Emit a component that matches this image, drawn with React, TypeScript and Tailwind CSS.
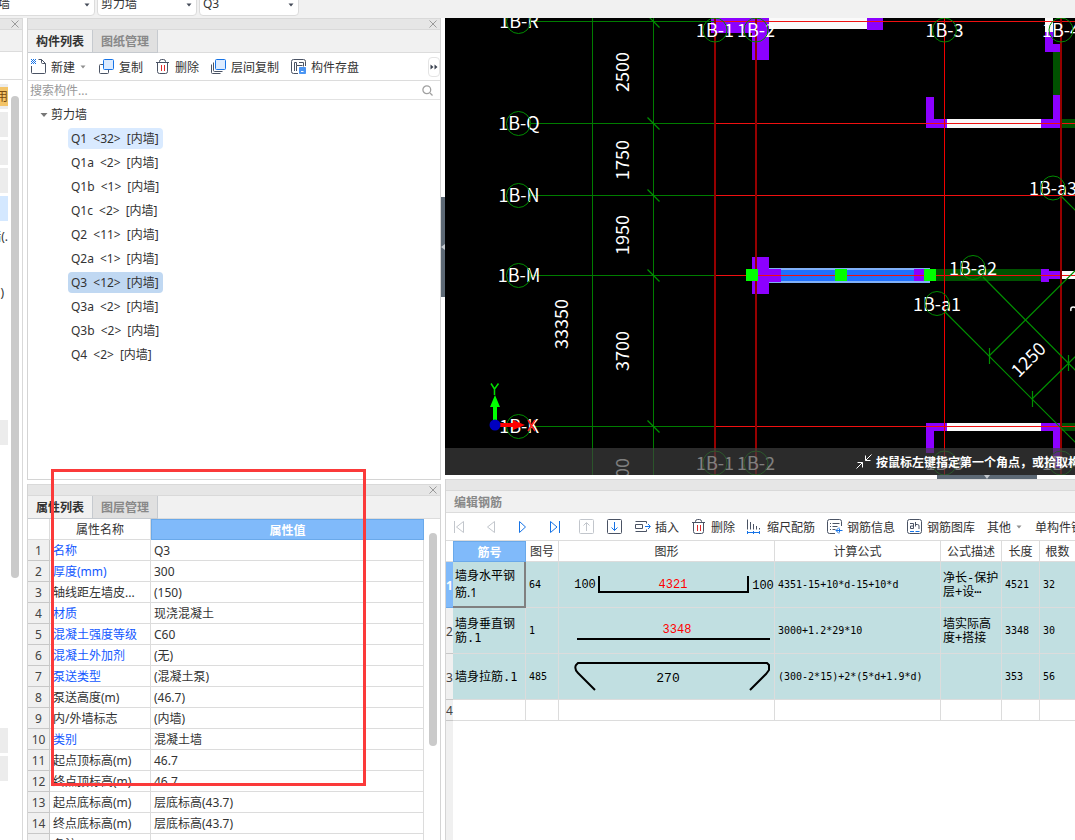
import React, { useState } from 'react';
import clsx from 'clsx';

interface WallComponent {
  name: string;
  count: number;
}

interface Property {
  name: string;
  value: string;
  editable?: boolean;
}

const walls: WallComponent[] = [
  { name: 'Q1', count: 32 },
  { name: 'Q1a', count: 2 },
  { name: 'Q1b', count: 1 },
  { name: 'Q1c', count: 2 },
  { name: 'Q2', count: 11 },
  { name: 'Q2a', count: 1 },
  { name: 'Q3', count: 12 },
  { name: 'Q3a', count: 2 },
  { name: 'Q3b', count: 2 },
  { name: 'Q4', count: 2 },
];

const properties: Property[] = [
  { name: '名称', value: 'Q3', editable: true },
  { name: '厚度(mm)', value: '300', editable: true },
  { name: '轴线距左墙皮...', value: '(150)' },
  { name: '材质', value: '现浇混凝土', editable: true },
  { name: '混凝土强度等级', value: 'C60', editable: true },
  { name: '混凝土外加剂', value: '(无)', editable: true },
  { name: '泵送类型', value: '(混凝土泵)', editable: true },
  { name: '泵送高度(m)', value: '(46.7)' },
  { name: '内/外墙标志', value: '(内墙)' },
  { name: '类别', value: '混凝土墙', editable: true },
  { name: '起点顶标高(m)', value: '46.7' },
  { name: '终点顶标高(m)', value: '46.7' },
  { name: '起点底标高(m)', value: '层底标高(43.7)' },
  { name: '终点底标高(m)', value: '层底标高(43.7)' },
  { name: '备注', value: '' },
];

// Navigation tree rows, only their right end shows
const navRows = Array.from({ length: 27 }, (_, i) => {
  if (i === 4) return { bg: 'bg-[#d4e8ff]', text: '' };
  if (i === 5) return { bg: 'bg-white', text: '墙(.' };
  if (i === 7) return { bg: 'bg-white pr-1', text: ')' };
  if ([0, 1, 2, 3, 12, 23, 24].includes(i)) return { bg: 'bg-[#ececec]', text: '' };
  return { bg: 'bg-white', text: '' };
});

/* ---------- icons ---------- */

const Svg = ({ children, className }: { children: React.ReactNode; className?: string }) => (
  <svg width="16" height="16" viewBox="0 0 16 16" fill="none" stroke="#4a5364" className={clsx('shrink-0', className)}>
    {children}
  </svg>
);

const NewIcon = () => (
  <Svg>
    <path d="M7.500 .5h3l4 4v9a1 1 0 0 1-1 1h-12a1 1 0 0 1-1-1V7M10.500 .5v3a1 1 0 0 0 1 1h3" />
    <path d="M0 .5h1M2 .5h1M4 .5h1M1 1.500h1M3 1.500h1M0 2.500h1M2 2.500h1M4 2.500h1M1 3.500h1M3 3.500h1M0 4.500h1M2 4.500h1M4 4.500h1" stroke="#1673e6" />
  </Svg>
);

const CopyIcon = () => (
  <Svg>
    <path d="M4 5.500H1.500a1 1 0 0 0-1 1v7a1 1 0 0 0 1 1h7a1 1 0 0 0 1-1V11" />
    <rect x="4.500" y=".5" width="10" height="10" rx="1" fill="#dcebff" stroke="#1673e6" />
  </Svg>
);

const LayerCopyIcon = () => (
  <Svg>
    <path d="M2.500 3.500v8a1 1 0 0 0 1 1h8M.5 5.500v8a1 1 0 0 0 1 1h8" />
    <rect x="4.500" y=".5" width="10" height="10" rx="1" fill="#dcebff" stroke="#1673e6" />
  </Svg>
);

const TrashIcon = () => (
  <Svg>
    <path d="M1 3.500h13M4.500 3.500v-1a2 2 0 0 1 2-2h2a2 2 0 0 1 2 2v1M2.500 3.500v9a2 2 0 0 0 2 2h6a2 2 0 0 0 2-2v-9" />
    <path d="M6.500 6v6M9.500 6v6" stroke="#e22b2b" />
  </Svg>
);

const SaveIcon = () => (
  <Svg>
    <path d="M7 14.500H2.500a2 2 0 0 1-2-2v-10a2 2 0 0 1 2-2h10a2 2 0 0 1 2 2V7M3.500 12V3.500h2v3h6M8 3.500h4.500v4M5.500 6.500V12" />
    <path d="M8.500 8.500h6v6h-6z" fill="#4b95f3" stroke="#4b95f3" />
    <path d="M10 12.500h2.500" stroke="#fff" />
  </Svg>
);

const InsertIcon = () => (
  <Svg>
    <path d="M.5 2.500h11M.5 12.500h11M.5 5.500h7v4h-7zM11.500 2.500v2M11.500 10.500v2" />
    <path d="M10 7.500h5M13 5 15.500 7.500 13 10" stroke="#1673e6" />
  </Svg>
);

const ScaleIcon = () => (
  <Svg>
    <path d="M.5 .5v10M3.500 3v7.500M6.500 5v5.500M9.500 7v3.500M12.500 9v1.500" />
    <path d="M1 13.500h12M.5 12v3M6.500 12v3M12.500 12v3" stroke="#1673e6" />
  </Svg>
);

const InfoIcon = () => (
  <Svg>
    <path d="M8 14.500H2.500a2 2 0 0 1-2-2v-10a2 2 0 0 1 2-2h10a2 2 0 0 1 2 2V7M3 4.500h1M5.500 4.500h7M3 7.500h1M5.500 7.500h5M3 10.500h1M5.500 10.500h3" />
    <path d="M15.500 11.500H9M12 8.500 9 11.500l3 3M12.500 9.500v4" stroke="#1673e6" />
  </Svg>
);

const LibraryIcon = () => (
  <Svg>
    <rect x=".5" y=".5" width="14" height="14" rx="2" />
    <path d="M3 4.500h3.500v5h-3v-2.500h3M8.500 3v4.500M8.500 5.500h2a1.500 1.500 0 0 1 1.500 1.500v3" />
    <path d="M3 12.500h4M8.500 12.500h4" stroke="#1673e6" />
  </Svg>
);

const FirstIcon = () => (
  <Svg>
    <path d="M3.500 2v12M12.500 2.500v11L5.500 8z" stroke="#c2c6cc" />
  </Svg>
);

const PrevIcon = () => (
  <Svg>
    <path d="M11.500 2.500v11L4.500 8z" stroke="#c2c6cc" />
  </Svg>
);

const NextIcon = () => (
  <Svg>
    <path d="M4.500 2.500v11l6-5.500z" stroke="#1673e6" />
  </Svg>
);

const LastIcon = () => (
  <Svg>
    <path d="M3.500 2.500v11L10 8zM12.500 2v12" stroke="#1673e6" />
  </Svg>
);

const UpIcon = () => (
  <Svg>
    <g stroke="#c2c6cc">
      <rect x=".5" y=".5" width="14" height="14" rx="1" />
      <path d="M7.500 12V4M4.500 6.500l3-3 3 3" />
    </g>
  </Svg>
);

const DownIcon = () => (
  <Svg>
    <rect x=".5" y=".5" width="14" height="14" rx="1" />
    <path d="M7.500 3v8.500M4.500 8.500l3 3 3-3" stroke="#1673e6" />
  </Svg>
);

const CloseIcon = () => (
  <svg width="8" height="8" viewBox="0 0 8 8" stroke="#9a9a9a">
    <path d="M.5 .5l7 7M7.500 .5l-7 7" />
  </svg>
);

const CaretDown = ({ className }: { className?: string }) => (
  <svg width="8" height="8" viewBox="0 0 8 8" className={className}>
    <path d="M1.500 2.500h5L4 5.500z" fill="currentColor" />
  </svg>
);

/* ---------- shared pieces ---------- */

const ToolButton = ({ icon, label, dropdown }: { icon?: React.ReactNode; label: string; dropdown?: boolean }) => (
  <button className="flex shrink-0 items-center gap-1 whitespace-nowrap">
    {icon}
    <span className="pt-0.5">{label}</span>
    {dropdown && <CaretDown className="text-[#909090]" />}
  </button>
);

const PanelStrip = () => (
  <div className="flex h-3 shrink-0 items-center justify-end border-y border-[#d9d9d9] bg-[#e6e6e6] px-[3px]">
    <button aria-label="关闭">
      <CloseIcon />
    </button>
  </div>
);

const Tabs = ({ labels }: { labels: string[] }) => {
  const [active, setActive] = useState(0);
  return (
    <div className="flex h-[23px] shrink-0 border-b border-[#dcdcdc] bg-[#f1f1f1]">
      {labels.map((label, i) => (
        <button
          key={label}
          onClick={() => setActive(i)}
          className={clsx(
            'h-[23px] w-[65px] border-r border-b border-[#c6cacf] pt-0.5 font-bold',
            active === i ? 'bg-[#f1f1f1] text-[#333]' : 'bg-[#e0e0e0] text-[#888]',
          )}
        >
          {label}
        </button>
      ))}
    </div>
  );
};

const TopSelect = ({ label, value, className }: { label: string; value: string; className: string }) => (
  <div className={clsx('relative shrink-0', className)}>
    <select
      aria-label={label}
      className="h-6 w-full appearance-none rounded border border-[#dcdcdc] bg-white px-[3px] text-[#333]"
    >
      <option>{value}</option>
    </select>
    <CaretDown className="pointer-events-none absolute top-[9px] right-1 text-[#444b58]" />
  </div>
);

/* ---------- left side ---------- */

const NavStrip = () => (
  <aside className="flex w-[23px] shrink-0 flex-col border-r border-[#d9d9d9] bg-white">
    <PanelStrip />
    <div className="h-[22px] shrink-0 border-b border-[#dcdcdc] bg-[#f1f1f1]" />
    <div className="h-7 shrink-0 border-b border-[#dcdcdc]" />
    <div className="flex min-h-0 flex-1 gap-[3px] overflow-hidden pt-1">
      <div className="flex w-2 flex-col gap-[3px] overflow-hidden">
        {navRows.map((row, i) => (
          <div key={i} className={clsx('flex h-[25px] shrink-0 items-center justify-end overflow-hidden text-[#333]', row.bg)}>
            {i === 0 ? (
              <span className="flex h-[19px] w-2 items-center justify-end bg-[#f3c468] text-[#7a4a10]">用</span>
            ) : (
              <span className="whitespace-nowrap">{row.text}</span>
            )}
          </div>
        ))}
      </div>
      <div className="mt-3 h-[482px] w-2 rounded-full bg-[#cacaca]" />
    </div>
  </aside>
);

const ComponentList = () => {
  const [selected, setSelected] = useState('Q3');
  return (
    <section className="flex min-h-0 flex-1 flex-col border border-t-0 border-[#d4d4d4] bg-white">
      <PanelStrip />
      <Tabs labels={['构件列表', '图纸管理']} />
      <div className="flex h-7 shrink-0 items-center gap-3 border-b border-[#dcdcdc] pl-[3px]">
        <ToolButton icon={<NewIcon />} label="新建" dropdown />
        <ToolButton icon={<CopyIcon />} label="复制" />
        <ToolButton icon={<TrashIcon />} label="删除" />
        <ToolButton icon={<LayerCopyIcon />} label="层间复制" />
        <ToolButton icon={<SaveIcon />} label="构件存盘" />
        <button aria-label="更多" className="ml-auto flex h-5 w-3 items-center justify-center rounded border border-[#e4e4e4]">
          <svg width="8" height="6" viewBox="0 0 8 6" fill="#3c4350" className="shrink-0">
            <path d="M.5 .5 3.500 3 .5 5.500zM4.500 .5 7.500 3 4.500 5.500z" />
          </svg>
        </button>
      </div>
      <div className="flex h-[19px] shrink-0 items-center border-b border-[#e2e2e2] pr-[7px] pl-0.5">
        <input
          type="text"
          aria-label="搜索构件"
          placeholder="搜索构件..."
          className="h-4 flex-1 bg-transparent pt-0.5 outline-none placeholder:text-[#999]"
        />
        <svg width="11" height="11" viewBox="0 0 11 11" fill="none" stroke="#a0a0a0" strokeWidth="1.300">
          <circle cx="4.800" cy="4.800" r="3.900" />
          <path d="M8 8l2.500 2.500" />
        </svg>
      </div>
      <div className="pt-[5px] pl-3">
        <button className="flex h-5 items-center gap-[3px]">
          <svg width="8" height="8" viewBox="0 0 8 8" fill="#777">
            <path d="M.5 2h7L4 6z" />
          </svg>
          剪力墙
        </button>
        <ul className="mt-[3px] space-y-[3px] pl-7">
          {walls.map((wall) => (
            <li key={wall.name} className="h-[21px]">
              <button
                onClick={() => setSelected(wall.name)}
                className={clsx(
                  'flex h-[21px] items-center gap-1.5 rounded px-[3px] whitespace-nowrap',
                  wall.name === selected && 'bg-[#c0d8f2] pr-1',
                  wall.name === 'Q1' && wall.name !== selected && 'bg-[#d9eaff] pr-1',
                )}
              >
                <span>{wall.name}</span>
                <span>&lt;{wall.count}&gt;</span>
                <span>[内墙]</span>
              </button>
            </li>
          ))}
        </ul>
      </div>
    </section>
  );
};

const PropertyPanel = () => (
  <section className="flex h-[356px] shrink-0 flex-col overflow-hidden border-x border-[#d4d4d4] bg-white">
    <PanelStrip />
    <Tabs labels={['属性列表', '图层管理']} />
    <div className="flex min-h-0 flex-1 overflow-hidden">
      <div className="min-w-0 flex-1">
        <table className="w-full table-fixed border-separate border-spacing-0">
          <colgroup>
            <col className="w-[22px]" />
            <col className="w-[101px]" />
            <col />
          </colgroup>
          <thead>
            <tr className="h-[21px]">
              <th className="border-r border-b border-[#dcdcdc]" />
              <th className="border-r border-b border-[#dcdcdc] px-0 pt-0.5 pb-0 font-normal">属性名称</th>
              <th className="border border-[#6aa9ea] bg-[#80bafa] px-0 pt-0.5 pb-0 font-bold text-white">属性值</th>
            </tr>
          </thead>
          <tbody>
            {properties.map((property, i) => (
              <tr key={property.name} className="h-[21px]">
                <td className="border-r border-b border-[#c8c8c8] bg-[#f0f0f0] px-0 pt-0.5 pb-0 text-center text-[#444]">{i + 1}</td>
                <td className={clsx('border-r border-b border-[#dcdcdc] px-[3px] pt-0.5 pb-0 whitespace-nowrap', property.editable && 'text-[#1358ff]')}>
                  {property.name}
                </td>
                <td className="border-r border-b border-[#dcdcdc] px-[3px] pt-0.5 pb-0 whitespace-nowrap">{property.value}</td>
              </tr>
            ))}
          </tbody>
        </table>
      </div>
      <div className="w-4 shrink-0 pt-[14px] pl-[5px]">
        <div className="h-[213px] w-2 rounded-full bg-[#cacaca]" />
      </div>
    </div>
  </section>
);

/* ---------- drawing area ---------- */

const rowAxes = [
  { label: '1B-R', y: 3.5 },
  { label: '1B-Q', y: 105.5 },
  { label: '1B-N', y: 177.5 },
  { label: '1B-M', y: 257.5 },
  { label: '1B-K', y: 408.5 },
];

const columnAxes = [
  { label: '1B-1', x: 270, wide: true },
  { label: '1B-2', x: 311, wide: true },
  { label: '1B-3', x: 499.5 },
  { label: '1B-4', x: 616, wide: true },
];

const verticalSizes = [
  { label: '2500', x: 184, y: 54 },
  { label: '1750', x: 184, y: 142 },
  { label: '1950', x: 184, y: 217 },
  { label: '3700', x: 184, y: 333 },
  { label: '33350', x: 123, y: 306 },
];

const obliqueAxes = [
  { label: '1B-a1', x: 492, y: 285.5 },
  { label: '1B-a2', x: 528, y: 249.5 },
  { label: '1B-a3', x: 608, y: 170 },
];

const DrawingArea = () => (
  <div className="relative min-h-0 flex-1 overflow-hidden bg-black">
    <svg width="100%" height="100%" className="block" fontFamily="'Noto Sans CJK SC', sans-serif" fontSize="18">
      {/* walls */}
      <g fill="#fafafa">
        <rect x="324" y="0" width="98" height="11" />
        <rect x="600" y="0" width="8" height="14" />
        <rect x="502" y="101" width="94" height="9" />
        <rect x="616" y="253" width="900" height="8" />
        <rect x="502" y="405" width="94" height="8" />
      </g>
      <g fill="#005200">
        <rect x="608" y="34" width="9" height="43" />
        <rect x="617" y="101" width="900" height="9" />
        <rect x="491" y="251" width="105" height="12" />
        <rect x="617" y="405" width="900" height="8" />
      </g>
      <rect x="323" y="250" width="162" height="15" fill="#80b0f8" />
      <rect x="323" y="252" width="162" height="11" fill="#1f70ff" />
      <g fill="#8c00ff">
        <path d="M266 0H324V42H307V15H266z" />
        <rect x="422" y="0" width="16" height="12" />
        <path d="M600 14H608V26H616V34H600z" />
        <path d="M481 79H489V101H502V110H481z" />
        <path d="M608 77H616V110H596V101H608z" />
        <path d="M307 239H324V251H336V264H324V276H307z" />
        <rect x="469" y="251" width="11" height="12" />
        <path d="M596 251H604V253H616V261H604V264H596z" />
        <path d="M481 405H502V413H489V435H481z" />
        <path d="M596 405H616V450H608V413H596z" />
      </g>

      {/* axis grid */}
      <g stroke="#007c00" fill="none">
        <path d="M147.500 0V1000M208.500 0V1000" />
        {rowAxes.map((axis) => (
          <path key={axis.label} d={`M86 ${axis.y}H270`} />
        ))}
      </g>
      {rowAxes.map((axis) => (
        <path key={axis.label} d={`M202.500 ${axis.y - 6}l12 12`} stroke="#009000" strokeWidth="1.200" />
      ))}
      {rowAxes.map((axis) => (
        <path key={axis.label} d={`M270 ${axis.y}H2000`} stroke="#f01010" />
      ))}
      {columnAxes.map((axis) => (
        <path key={axis.label} d={`M${axis.x} 0V1000`} stroke={axis.wide ? '#960000' : '#f00000'} strokeWidth={axis.wide ? 2 : 1} />
      ))}
      <g stroke="#009000" strokeWidth="1.200" fill="none">
        <path d="M500 294 L636 430M538 259 L636 358M544 338 L636 247M587 381 L636 333M617 179 L636 198" />
        <path d="M544.500 330v16M587.500 373v16M623.500 337v16" />
      </g>

      {/* selection grips */}
      <g fill="#00ff00">
        <rect x="301" y="251" width="12" height="12" />
        <rect x="390" y="251" width="12" height="12" />
        <rect x="479" y="251" width="12" height="12" />
      </g>

      {/* axis labels */}
      <g fill="#fff" textAnchor="middle">
        {rowAxes.map((axis) => (
          <text key={axis.label} x="74" y={axis.y + 6}>{axis.label}</text>
        ))}
        {columnAxes.map((axis) => (
          <React.Fragment key={axis.label}>
            <text x={axis.x} y="19">{axis.label}</text>
            <text x={axis.x} y="452">{axis.label}</text>
          </React.Fragment>
        ))}
        {obliqueAxes.map((axis) => (
          <text key={axis.label} x={axis.x} y={axis.y + 7}>{axis.label}</text>
        ))}
        {verticalSizes.map((size) => (
          <text key={size.label} transform={`translate(${size.x} ${size.y}) rotate(-90)`}>{size.label}</text>
        ))}
        <text transform="translate(184 450) rotate(-90)">00</text>
        <text transform="translate(588 346) rotate(-45)">1250</text>
      </g>
      <path d="M626 293c-1-4 2-5 5-3" stroke="#fff" strokeWidth="1.500" fill="none" />
      <g stroke="#008c00" fill="none">
        {rowAxes.map((axis) => (
          <circle key={axis.label} cx="73.500" cy={axis.y} r="12" />
        ))}
        {columnAxes.map((axis) => (
          <React.Fragment key={axis.label}>
            <circle cx={axis.x} cy="12" r="12" />
            <circle cx={axis.x} cy="445" r="12" />
          </React.Fragment>
        ))}
        {obliqueAxes.map((axis) => (
          <circle key={axis.label} cx={axis.x} cy={axis.y} r="12" />
        ))}
      </g>

      {/* UCS marker */}
      <path d="M48 404V389H45L50 377 55 389H52V404z" fill="#00ff00" />
      <path d="M53 405H68V402L80 407 68 412V409H53z" fill="#ff0000" />
      <circle cx="50" cy="407" r="5.500" fill="#0000c0" />
      <path d="M46 365.500L49.500 371M53.500 365.500L49.500 371V377" stroke="#00e000" strokeWidth="1.500" fill="none" />
      <path d="M83 402L90 413M90 402L83 413" stroke="#ff2020" strokeWidth="1.500" />
    </svg>

    {/* command hint */}
    <div className="absolute inset-x-0 bottom-0 flex h-[27px] items-center gap-1 bg-[#404040]/67 pl-[411px] font-bold whitespace-nowrap text-white">
      <svg width="16" height="16" viewBox="0 0 16 16" fill="none" stroke="#fff" className="shrink-0">
        <path d="M15.500 .5l-6 6M9.500 1.500v5h5M.5 14.500l6-6M1.500 8.500h5v5" />
      </svg>
      <span className="pt-0.5">按鼠标左键指定第一个角点，或拾取构件</span>
    </div>
  </div>
);

/* ---------- rebar table ---------- */

const shapeText = { fontFamily: "'Liberation Mono', monospace", textAnchor: 'middle' as const };

const HorizontalShape = () => (
  <svg width="215" height="45" viewBox="0 0 215 45" className="mx-auto block" fontSize="12" {...shapeText}>
    <path d="M40 14V30H189V14" fill="none" stroke="#000" strokeWidth="2" />
    <text x="26" y="26">100</text>
    <text x="114" y="26" fill="#f00">4321</text>
    <text x="204" y="27">100</text>
  </svg>
);

const VerticalShape = () => (
  <svg width="215" height="45" viewBox="0 0 215 45" className="mx-auto block" fontSize="12" {...shapeText}>
    <path d="M18 31H211" stroke="#000" strokeWidth="2" />
    <text x="118" y="25" fill="#f00">3348</text>
  </svg>
);

const TieShape = () => (
  <svg width="215" height="45" viewBox="0 0 215 45" className="mx-auto block" fontSize="13" {...shapeText}>
    <path d="M36 36L19 19Q15 15 17 11L19 9H208L210 11V16L207 20L191 36" fill="none" stroke="#000" strokeWidth="2" />
    <text x="109" y="28">270</text>
  </svg>
);

const rebarRows = [
  { name: '墙身水平钢\n筋.1', no: '64', shape: <HorizontalShape />, formula: '4351-15+10*d-15+10*d', note: '净长-保护\n层+设⋯', length: '4521', count: '32' },
  { name: '墙身垂直钢\n筋.1', no: '1', shape: <VerticalShape />, formula: '3000+1.2*29*10', note: '墙实际高\n度+搭接', length: '3348', count: '30' },
  { name: '墙身拉筋.1', no: '485', shape: <TieShape />, formula: '(300-2*15)+2*(5*d+1.9*d)', note: '', length: '353', count: '56' },
];

const headers = ['图号', '图形', '计算公式', '公式描述', '长度', '根数'];

const RebarPanel = () => (
  <section className="flex h-[361px] shrink-0 flex-col overflow-hidden border-l border-[#d4d4d4] bg-white">
    <div className="h-3 shrink-0 border-y border-[#d9d9d9] bg-[#e6e6e6]" />
    <h2 className="h-[22px] shrink-0 border-b border-[#dcdcdc] bg-[#f1f1f1] pl-2 leading-[23px] font-bold text-[#888]">编辑钢筋</h2>
    <div className="flex h-7 shrink-0 items-center gap-3 overflow-hidden border-b border-[#dcdcdc] pl-[5px]">
      <div className="flex shrink-0 gap-4">
        <button aria-label="首条"><FirstIcon /></button>
        <button aria-label="上一条"><PrevIcon /></button>
        <button aria-label="下一条"><NextIcon /></button>
        <button aria-label="末条"><LastIcon /></button>
        <button aria-label="上移"><UpIcon /></button>
      </div>
      <button aria-label="下移"><DownIcon /></button>
      <ToolButton icon={<InsertIcon />} label="插入" />
      <ToolButton icon={<TrashIcon />} label="删除" />
      <ToolButton icon={<ScaleIcon />} label="缩尺配筋" />
      <ToolButton icon={<InfoIcon />} label="钢筋信息" />
      <ToolButton icon={<LibraryIcon />} label="钢筋图库" />
      <ToolButton label="其他" dropdown />
      <ToolButton label="单构件钢筋" />
    </div>
    <div className="min-h-0 flex-1 bg-[linear-gradient(to_right,#f0f0f0_7px,#ffffff_7px)]">
      <table className="w-full min-w-[630px] table-fixed border-separate border-spacing-0">
        <colgroup>
          <col className="w-[7px]" />
          <col className="w-[73px]" />
          <col className="w-[33px]" />
          <col className="w-[216px]" />
          <col className="w-[166px]" />
          <col className="w-[61px]" />
          <col className="w-[38px]" />
          <col />
        </colgroup>
        <thead>
          <tr className="h-[21px]">
            <th className="border-b border-[#dcdcdc] bg-white p-0" />
            <th className="border border-[#6aa9ea] bg-[#80bafa] px-0 pt-0.5 pb-0 font-bold text-white">筋号</th>
            {headers.map((header) => (
              <th key={header} className="border-r border-b border-[#dcdcdc] bg-white px-0 pt-0.5 pb-0 font-normal whitespace-nowrap">{header}</th>
            ))}
          </tr>
        </thead>
        <tbody className="font-['DejaVu_Sans_Mono','Noto_Sans_CJK_SC',monospace] text-[10px] text-black">
          {rebarRows.map((row, i) => (
            <tr key={row.name} className="h-[46px] bg-[#c1dfe1]">
              <td
                className={clsx(
                  "border-b px-0 pt-0.5 pb-0 text-center font-['Noto_Sans',sans-serif] text-xs",
                  i === 0 ? 'border-[#6aa9ea] bg-[#80bafa] font-bold text-white' : 'border-[#c8c8c8] bg-[#f0f0f0] text-[#444]',
                )}
              >
                {i + 1}
              </td>
              <td
                className={clsx(
                  'px-0.5 py-0 text-xs whitespace-pre',
                  i === 0
                    ? "border-r-2 border-b-2 border-[#808080] font-['Noto_Sans','Noto_Sans_CJK_SC',sans-serif] leading-[17px]"
                    : 'border-r border-b border-[#dcdcdc] leading-[14px]',
                )}
              >
                {row.name}
              </td>
              <td className="border-r border-b border-[#dcdcdc] px-[3px] py-0">{row.no}</td>
              <td className="border-r border-b border-[#dcdcdc] p-0">{row.shape}</td>
              <td className="border-r border-b border-[#dcdcdc] px-[3px] py-0 whitespace-nowrap">{row.formula}</td>
              <td className="border-r border-b border-[#dcdcdc] px-0.5 py-0 text-xs leading-[14px] whitespace-pre">{row.note}</td>
              <td className="border-r border-b border-[#dcdcdc] px-[3px] py-0">{row.length}</td>
              <td className="border-b border-[#dcdcdc] px-[3px] py-0">{row.count}</td>
            </tr>
          ))}
          <tr className="h-[21px] bg-white">
            <td className="border-b border-[#c8c8c8] bg-[#f0f0f0] px-0 pt-0.5 pb-0 text-center font-['Noto_Sans',sans-serif] text-xs text-[#444]">4</td>
            {Array.from({ length: 7 }, (_, i) => (
              <td key={i} className="border-r border-b border-[#dcdcdc] p-0" />
            ))}
          </tr>
        </tbody>
      </table>
    </div>
  </section>
);

export default function App() {
  return (
    <div className="flex h-screen flex-col overflow-hidden bg-white font-['Noto_Sans','Noto_Sans_CJK_SC',sans-serif] text-xs text-[#333]">
      {/* Element pickers */}
      <header className="flex h-[18px] shrink-0 items-end gap-0.5 overflow-hidden bg-[#f1f1f1] pb-0.5">
        <TopSelect label="构件大类" value="墙" className="-ml-1.5 w-[101px]" />
        <TopSelect label="构件类型" value="剪力墙" className="w-[100px]" />
        <TopSelect label="构件" value="Q3" className="w-[100px]" />
      </header>

      <main className="flex min-h-0 flex-1">
        <NavStrip />
        <div className="relative ml-1 flex w-[414px] shrink-0 flex-col gap-1">
          <ComponentList />
          <PropertyPanel />
          <div className="pointer-events-none absolute bottom-[54px] left-6 h-[317px] w-[315px] border-3 border-[#fb3a3a]" />
        </div>

        {/* Splitter */}
        <div className="flex w-1 shrink-0 flex-col">
          <button aria-label="折叠左侧" className="mt-[179px] flex h-[100px] items-center bg-[#5d6975]">
            <svg width="4" height="6" viewBox="0 0 4 6" fill="#c5cad0">
              <path d="M4 0v6L0 3z" />
            </svg>
          </button>
        </div>

        <div className="flex min-w-0 flex-1 flex-col">
          <DrawingArea />
          <div className="flex h-1 shrink-0 pl-[492px]">
            <button aria-label="折叠下方" className="flex h-1 w-[100px] items-center justify-center bg-[#5d6975]">
              <svg width="6" height="4" viewBox="0 0 6 4" fill="#c5cad0">
                <path d="M0 0h6L3 4z" />
              </svg>
            </button>
          </div>
          <RebarPanel />
        </div>
      </main>
    </div>
  );
}
